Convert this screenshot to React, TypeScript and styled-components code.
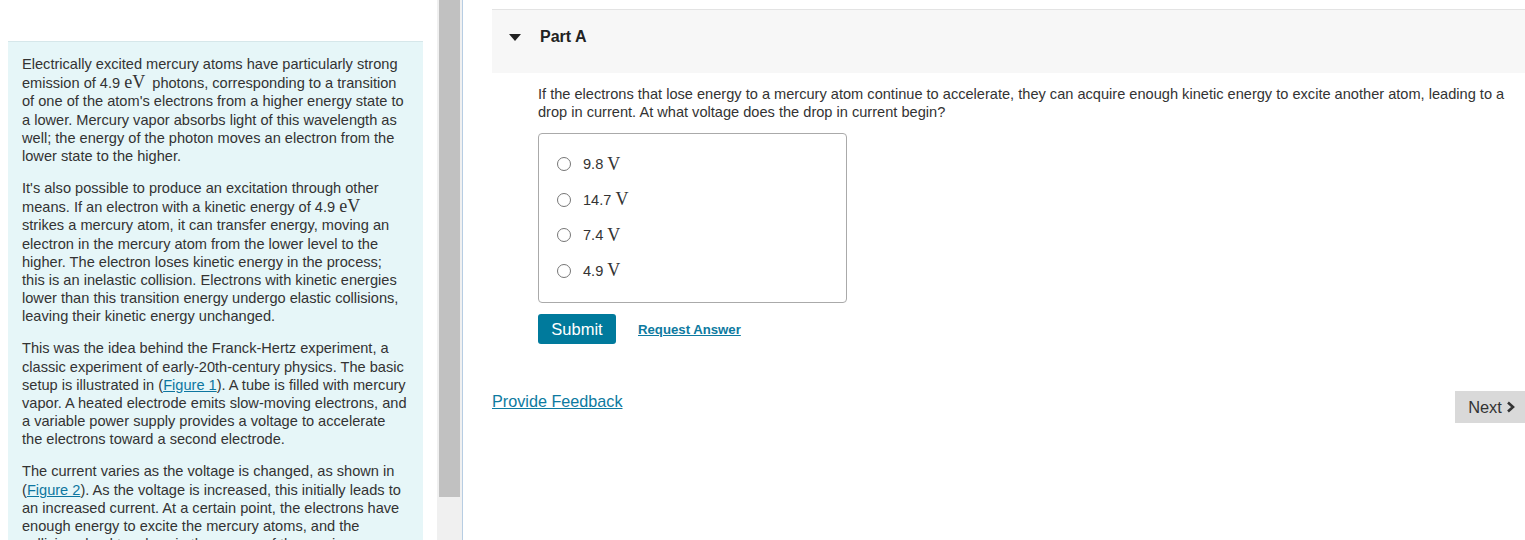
import React from "react";
import styled, { createGlobalStyle } from "styled-components";

const Global = createGlobalStyle`
  html, body { margin: 0; padding: 0; height: 100%; overflow: hidden; background: #fff; }
  body { font-family: "Liberation Sans", Arial, sans-serif; color: #333; }
  #root { height: 100%; }
`;

const Page = styled.div`
  display: flex;
  height: 540px;
  overflow: hidden;
`;

const LeftPane = styled.div`
  width: 437px;
  flex: none;
  padding: 41px 14px 0 8px;
  box-sizing: border-box;
  background: #fff;
  overflow: hidden;
`;

const InfoBox = styled.div`
  background: #e6f6f8;
  border-top: 1px solid #d6e7ea;
  padding: 13px 15px 20px 14px;
  font-size: 14.6px;
  line-height: 18.2px;
  color: #333;
`;

const Para = styled.p`
  margin: 0 0 13.8px 0;
`;

const Math = styled.span`
  font-family: "Liberation Serif", "Times New Roman", serif;
  font-size: 18px;
  line-height: 1;
  padding-right: 3px;
`;

const FigLink = styled.a`
  color: #0d76a0;
  text-decoration: underline;
`;

const Track = styled.div`
  width: 25px;
  flex: none;
  background: #f0f0f0;
  display: flex;
  justify-content: center;
`;

const Thumb = styled.div`
  width: 21px;
  height: 497px;
  background: #c1c1c1;
`;

const RightPane = styled.div`
  flex: 1;
  border-left: 1px solid #b7cde3;
  padding: 9px 0 0 29px;
  box-sizing: border-box;
  display: flex;
  flex-direction: column;
`;

const PartHeader = styled.div`
  height: 64px;
  background: #f7f7f7;
  border-top: 1px solid #e3e3e3;
  box-sizing: border-box;
  display: flex;
  align-items: center;
  padding-left: 17px;
  padding-bottom: 9px;
`;

const Caret = styled.span`
  width: 0;
  height: 0;
  border-left: 6px solid transparent;
  border-right: 6px solid transparent;
  border-top: 7px solid #222;
  margin-right: 19px;
`;

const PartTitle = styled.span`
  font-size: 16px;
  font-weight: bold;
  color: #222;
`;

const PartBody = styled.div`
  padding: 13px 16px 0 46px;
`;

const Question = styled.div`
  font-size: 14.6px;
  line-height: 17.5px;
  color: #333;
`;

const OptionsBox = styled.div`
  margin-top: 12px;
  width: 309px;
  height: 170px;
  box-sizing: border-box;
  border: 1px solid #aaa;
  border-radius: 4px;
  padding: 21px 0 0 18px;
  display: flex;
  flex-direction: column;
  gap: 17.5px;
`;

const OptionRow = styled.label`
  display: flex;
  align-items: center;
  height: 18px;
  font-size: 14.6px;
  color: #333;
`;

const Radio = styled.span`
  width: 12px;
  height: 12px;
  border: 1px solid #767676;
  border-radius: 50%;
  margin-right: 12px;
  flex: none;
`;

const Unit = styled.span`
  font-family: "Liberation Serif", "Times New Roman", serif;
  font-size: 18px;
  margin-left: 4px;
  color: #333;
`;

const Actions = styled.div`
  display: flex;
  align-items: center;
  margin-top: 11px;
  gap: 22px;
`;

const SubmitButton = styled.button`
  height: 30px;
  width: 78px;
  background: #007a9c;
  color: #fff;
  border: none;
  border-radius: 3px;
  font-family: "Liberation Sans", Arial, sans-serif;
  font-size: 16.5px;
  padding: 0;
`;

const RequestLink = styled.a`
  color: #0d7aa0;
  font-weight: bold;
  font-size: 13.2px;
  text-decoration: underline;
`;

const Footer = styled.div`
  display: flex;
  align-items: flex-start;
  justify-content: space-between;
  margin-top: 47px;
`;

const Feedback = styled.a`
  color: #0d7aa0;
  font-size: 16.2px;
  text-decoration: underline;
  margin-top: 1px;
`;

const NextButton = styled.button`
  height: 32px;
  width: 70px;
  background: #d9d9d9;
  border: none;
  color: #333;
  font-family: "Liberation Sans", Arial, sans-serif;
  font-size: 16.4px;
  display: flex;
  align-items: center;
  justify-content: center;
  gap: 4px;
  padding: 0 0 0 4px;
`;

const options = ["9.8", "14.7", "7.4", "4.9"];

export default function App() {
  return (
    <>
      <Global />
      <Page>
        <LeftPane>
          <InfoBox>
            <Para>
              Electrically excited mercury atoms have particularly strong emission of 4.9 <Math>eV</Math> photons, corresponding to a transition of one of the atom's electrons from a higher energy state to a lower. Mercury vapor absorbs light of this wavelength as well; the energy of the photon moves an electron from the lower state to the higher.
            </Para>
            <Para>
              It's also possible to produce an excitation through other means. If an electron with a kinetic energy of 4.9 <Math>eV</Math> strikes a mercury atom, it can transfer energy, moving an electron in the mercury atom from the lower level to the higher. The electron loses kinetic energy in the process; this is an inelastic collision. Electrons with kinetic energies lower than this transition energy undergo elastic collisions, leaving their kinetic energy unchanged.
            </Para>
            <Para>
              This was the idea behind the Franck-Hertz experiment, a classic experiment of early-20th-century physics. The basic setup is illustrated in (<FigLink href="#">Figure 1</FigLink>). A tube is filled with mercury vapor. A heated electrode emits slow-moving electrons, and a variable power supply provides a voltage to accelerate the electrons toward a second electrode.
            </Para>
            <Para>
              The current varies as the voltage is changed, as shown in (<FigLink href="#">Figure 2</FigLink>). As the voltage is increased, this initially leads to an increased current. At a certain point, the electrons have enough energy to excite the mercury atoms, and the collisions lead to a loss in the energy of the moving electrons, and a drop in the current.
            </Para>
          </InfoBox>
        </LeftPane>
        <Track>
          <Thumb />
        </Track>
        <RightPane>
          <PartHeader>
            <Caret />
            <PartTitle>Part A</PartTitle>
          </PartHeader>
          <PartBody>
            <Question>
              If the electrons that lose energy to a mercury atom continue to accelerate, they can acquire enough kinetic energy to excite another atom, leading to a drop in current. At what voltage does the drop in current begin?
            </Question>
            <OptionsBox>
              {options.map((o) => (
                <OptionRow key={o}>
                  <Radio />
                  {o}
                  <Unit>V</Unit>
                </OptionRow>
              ))}
            </OptionsBox>
            <Actions>
              <SubmitButton>Submit</SubmitButton>
              <RequestLink href="#">Request Answer</RequestLink>
            </Actions>
          </PartBody>
          <Footer>
            <Feedback href="#">Provide Feedback</Feedback>
            <NextButton>
              Next
              <svg width="10" height="12" viewBox="0 0 10 12">
                <path d="M2 1.5 L7 6 L2 10.5" fill="none" stroke="#333" strokeWidth="2.6" />
              </svg>
            </NextButton>
          </Footer>
        </RightPane>
      </Page>
    </>
  );
}
